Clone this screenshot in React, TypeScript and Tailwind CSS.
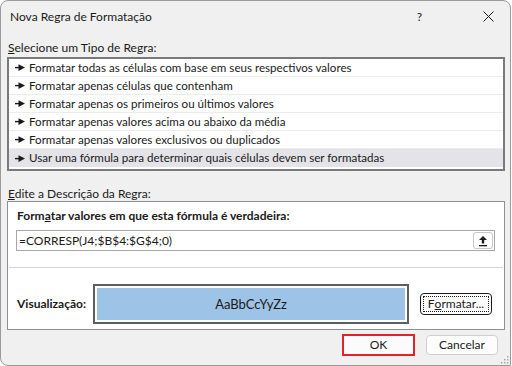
import React from "react";

const rules = [
  "Formatar todas as células com base em seus respectivos valores",
  "Formatar apenas células que contenham",
  "Formatar apenas os primeiros ou últimos valores",
  "Formatar apenas valores acima ou abaixo da média",
  "Formatar apenas valores exclusivos ou duplicados",
  "Usar uma fórmula para determinar quais células devem ser formatadas",
];

function Pointer() {
  return (
    <svg width="10" height="7" viewBox="0 0 10 7" className="shrink-0">
      <rect x="0" y="2.9" width="5" height="1.4" fill="#1a1a1a" />
      <path d="M3.5 0.3 L10 3.6 L3.5 6.9 Z" fill="#1a1a1a" />
    </svg>
  );
}

export default function App() {
  return (
    <div
      className="w-[512px] h-[366px] bg-white text-[12px] text-[#1a1a1a] overflow-hidden"
      style={{ fontFamily: '"Segoe UI", Lato, "Noto Sans", sans-serif' }}
    >
      <div className="relative w-[511px] h-[366px] bg-[#f0f0f0] border border-[#9a9a9a] rounded-t-[8px] rounded-bl-[8px] flex flex-col">
        {/* Title bar */}
        <div className="h-[31px] flex items-center pl-[9px] shrink-0">
          <span className="leading-[16px]">Nova Regra de Formatação</span>
          <span className="ml-auto mr-[61px] leading-[16px]">?</span>
          <svg width="11" height="11" viewBox="0 0 11 11" className="mr-[16px]">
            <path d="M0.5 0.5 L10.5 10.5 M10.5 0.5 L0.5 10.5" stroke="#1a1a1a" strokeWidth="1" />
          </svg>
        </div>

        <div className="pl-[7px] leading-[16px] mt-[8px] h-[17px]">
          <span className="underline">S</span>elecione um Tipo de Regra:
        </div>

        {/* Rule list */}
        <div className="ml-[6px] w-[498px] h-[114px] border-2 border-[#7a7a7a] bg-white flex flex-col">
          {rules.map((r, i) => (
            <div
              key={i}
              className={`h-[18px] shrink-0 flex items-center pl-[6px] gap-[4px] leading-[16px] text-[11.6px] ${
                i < 5 ? "border-b border-[#ececec]" : "bg-[#e4e4e8]"
              }`}
            >
              <Pointer />
              <span>{r}</span>
            </div>
          ))}
        </div>

        <div className="pl-[7px] leading-[16px] mt-[15px] h-[15px]">
          <span className="underline">E</span>dite a Descrição da Regra:
        </div>

        {/* Description panel */}
        <div className="ml-[6px] w-[498px] h-[129px] border border-[#8e8e96] bg-white flex flex-col">
          <div className="pl-[9px] pt-[6px] font-bold leading-[16px]">
            Form<span className="underline">a</span>tar valores em que esta fórmula é verdadeira:
          </div>
          <div className="ml-[8px] mt-[6px] w-[479px] h-[21px] border border-[#a8a8a8] flex items-center pl-[2px] pr-[1px]">
            <span className="leading-[16px]">=CORRESP(J4;$B$4:$G$4;0)</span>
            <div className="ml-auto w-[20px] h-[17px] border border-[#c8c8c8] rounded-[3px] flex items-center justify-center">
              <svg width="10" height="12" viewBox="0 0 10 12">
                <path d="M5 1 L9 5 L6.2 5 L6.2 8.5 L3.8 8.5 L3.8 5 L1 5 Z" fill="#1a1a1a" />
                <rect x="1" y="10" width="8" height="1.3" fill="#1a1a1a" />
              </svg>
            </div>
          </div>
          <div className="mx-[1px] mt-[16px] h-[1px] bg-[#d4d4d4]" />
          <div className="flex items-center mt-[16px]">
            <div className="pl-[9px] w-[85px] font-bold leading-[16px]">Visualização:</div>
            <div className="w-[316px] h-[40px] border-2 border-[#5e5e5e] p-[2px] bg-white">
              <div className="w-full h-full bg-[#9dc3e6] flex items-center justify-center text-[13px] leading-[16px]">
                AaBbCcYyZz
              </div>
            </div>
            <div className="ml-[11px] w-[72px] h-[22px] rounded-[4px] border border-[#1a1a1a] bg-[#fdfdfd] flex items-center justify-center">
              <div className="w-[66px] h-[16px] border border-dotted border-[#1a1a1a] flex items-center justify-center leading-[14px]">
                F<span className="underline">o</span>rmatar...
              </div>
            </div>
          </div>
        </div>

        {/* Footer buttons */}
        <div className="flex justify-end mt-[4px] pr-[12px] gap-[11px]">
          <div className="w-[73px] h-[22px] border-2 border-[#e5202e] bg-[#fbfbfb] flex items-center justify-center leading-[16px]">
            OK
          </div>
          <div className="mt-[1px] w-[72px] h-[20px] rounded-[4px] border border-[#cfcfcf] bg-[#fdfdfd] flex items-center justify-center leading-[16px]">
            Cancelar
          </div>
        </div>

        {/* resize grip */}
        <svg width="8" height="8" viewBox="0 0 8 8" className="absolute right-[1px] bottom-[1px]">
          <rect x="6" y="0" width="1.4" height="1.4" fill="#a0a0a0" />
          <rect x="3" y="3" width="1.4" height="1.4" fill="#a0a0a0" />
          <rect x="6" y="3" width="1.4" height="1.4" fill="#a0a0a0" />
          <rect x="0" y="6" width="1.4" height="1.4" fill="#a0a0a0" />
          <rect x="3" y="6" width="1.4" height="1.4" fill="#a0a0a0" />
          <rect x="6" y="6" width="1.4" height="1.4" fill="#a0a0a0" />
        </svg>
      </div>
    </div>
  );
}
